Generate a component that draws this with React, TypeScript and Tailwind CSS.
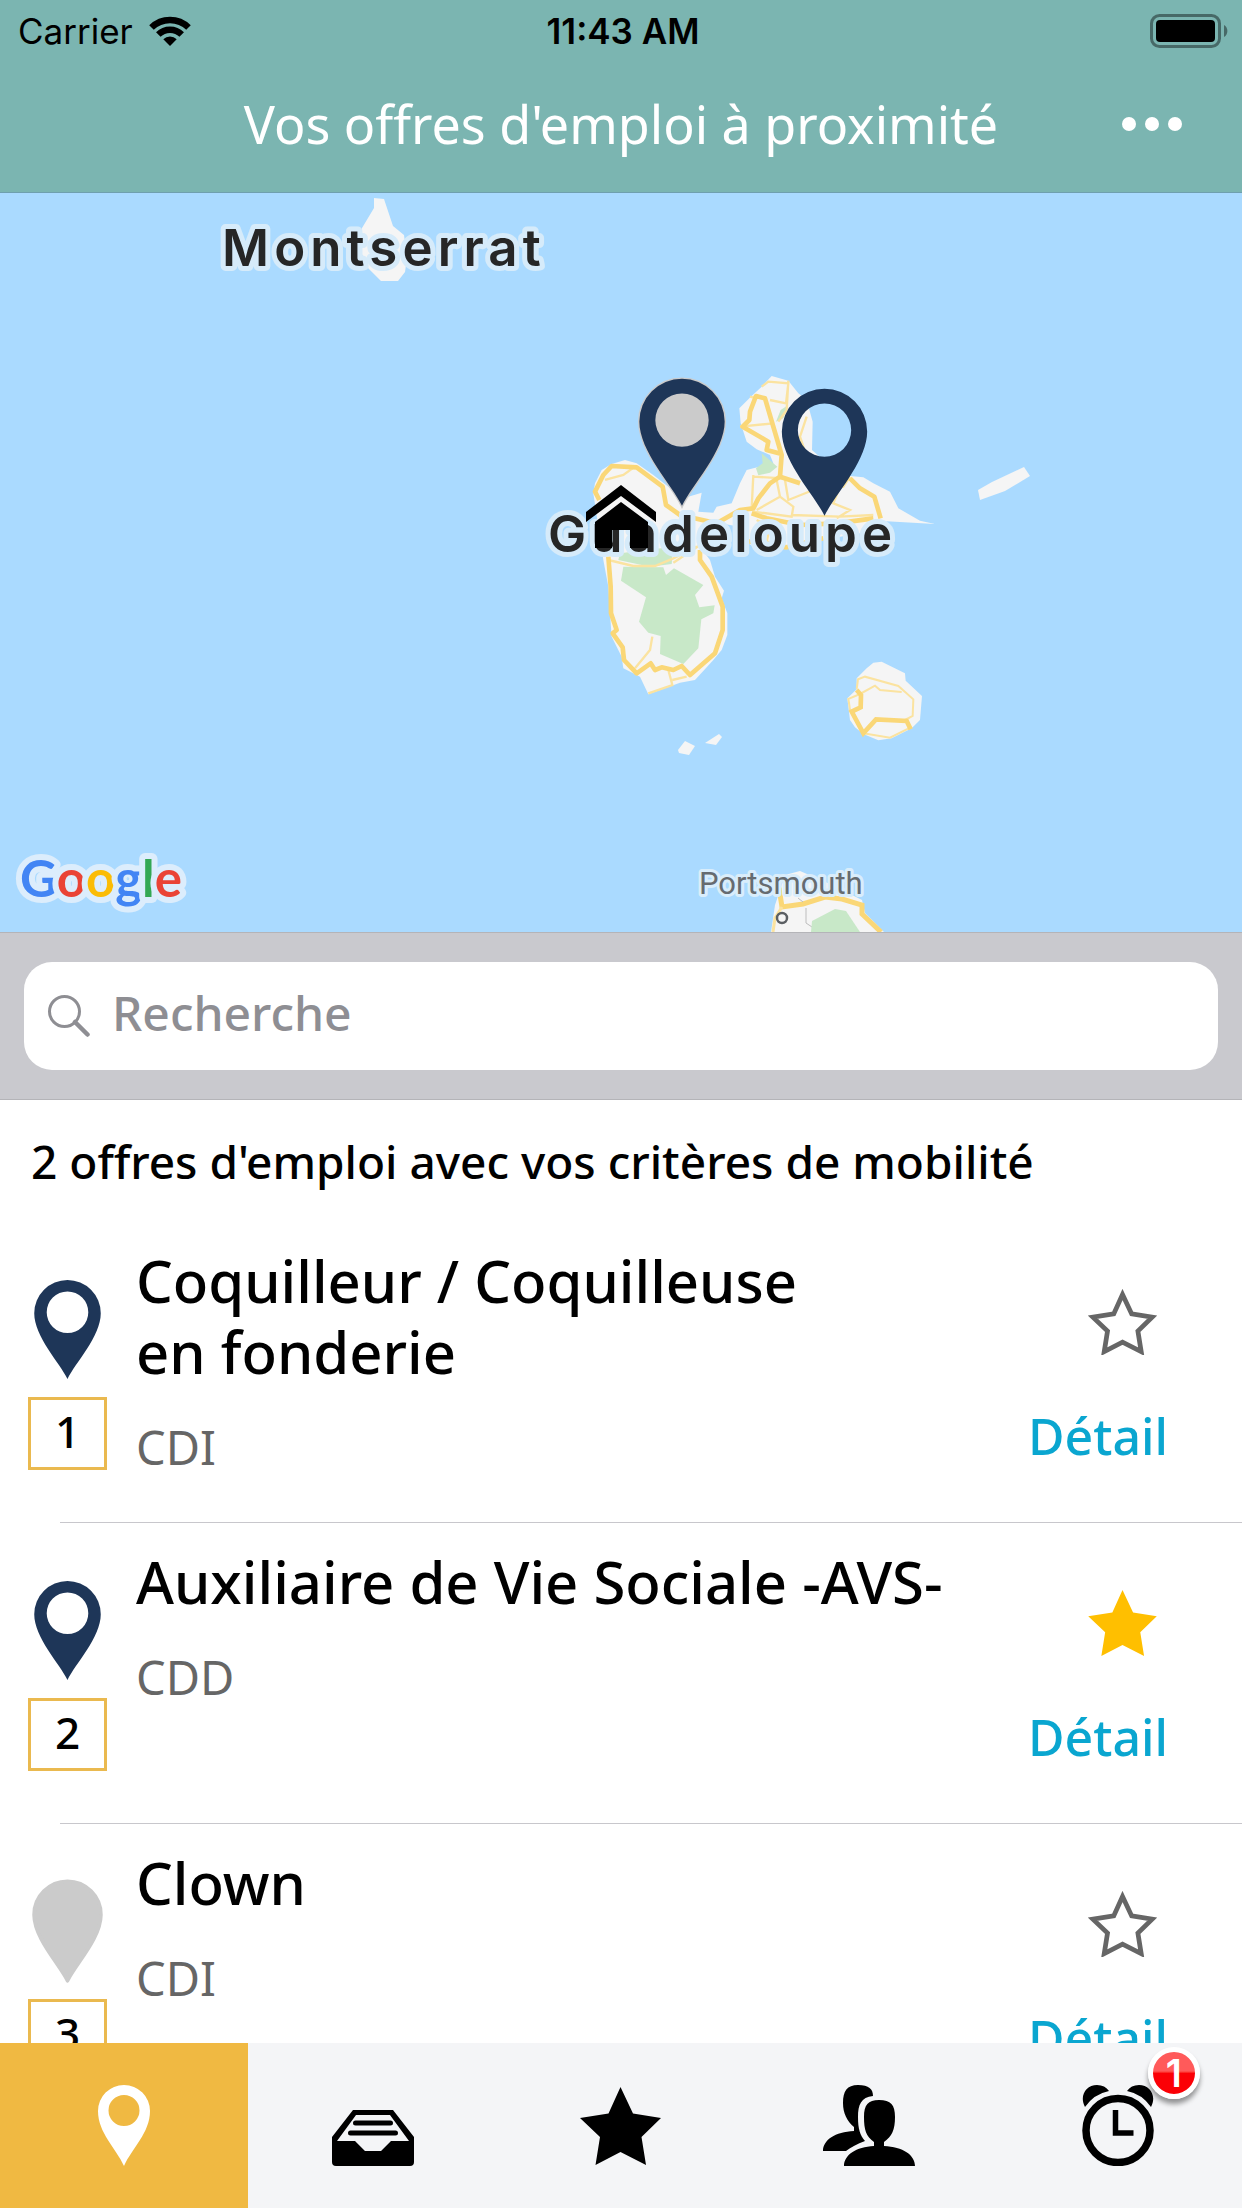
import React from "react";

const PIN_BODY =
  "M0 253C-30 190-128 90-128 0A128 128 0 0 1 128 0C128 90 30 190 0 253Z";
const PIN_HOLE = "M80 -4A80 80 0 1 0 -80 -4A80 80 0 1 0 80 -4Z";
const STAR =
  "M40.5 0L53 26.5L81 31L61.500 50L66 78L40.5 65L15.5 78L20 50L0 31L28.500 26.500Z";

const offers = [
  { id: 1, title: "Coquilleur / Coquilleuse\nen fonderie", contract: "CDI", starred: false, located: true },
  { id: 2, title: "Auxiliaire de Vie Sociale -AVS-", contract: "CDD", starred: true, located: true },
  { id: 3, title: "Clown", contract: "CDI", starred: false, located: false },
];

function StatusBar() {
  return (
    <div className="grid h-[62px] grid-cols-3 items-center pr-[14px] pl-[18px] font-['Inter',sans-serif] text-[35px] leading-[42px] text-black">
      <div className="flex items-center gap-4">
        <span>Carrier</span>
        <svg viewBox="0 0 42 30" className="h-[30px] w-[42px]" fill="none" stroke="#000" strokeWidth="6.500" aria-label="Wi-Fi">
          <path d="M2.500 11.500A26.500 26.500 0 0 1 39.500 11.500" />
          <path d="M9.300 18.500A16.800 16.800 0 0 1 32.700 18.500" />
          <path d="M21 30L14.300 23.300A9.500 9.500 0 0 1 27.700 23.300Z" fill="#000" stroke="none" />
        </svg>
      </div>
      <span className="text-center font-semibold">11:43 AM</span>
      <svg viewBox="0 0 78 34" className="h-[34px] w-[78px] justify-self-end" aria-label="Batterie">
        <rect x="1.500" y="1.500" width="68" height="31" rx="8" fill="none" stroke="#000" strokeOpacity=".42" strokeWidth="3" />
        <rect x="6" y="6" width="59" height="22" rx="4" fill="#000" />
        <path d="M74 11A7 7 0 0 1 74 23Z" fill="#000" fillOpacity=".42" />
      </svg>
    </div>
  );
}

function Header() {
  return (
    <header className="shrink-0 border-b border-[#6f9fae] bg-[#7bb5b1]">
      <StatusBar />
      <div className="grid grid-cols-[124px_1fr_124px] items-center pt-[30px] pb-[36px]">
        <h1 className="col-start-2 text-center text-[52px] leading-[64px] text-white">
          Vos offres d'emploi à proximité
        </h1>
        <button type="button" aria-label="Plus d'options" className="flex h-16 items-center gap-[9px] pl-1">
          <span className="size-[14px] rounded-full bg-white" />
          <span className="size-[14px] rounded-full bg-white" />
          <span className="size-[14px] rounded-full bg-white" />
        </button>
      </div>
    </header>
  );
}

function MapView() {
  return (
    <section aria-label="Carte" className="shrink-0 bg-[#aadaff]">
      <svg viewBox="0 193 1242 739" className="block w-full">
        <g fill="#f5f5f5">
          <path d="M374 198L384 199L393 226L404 235L407 258L405 272L398 281L381 281L368 268L358 245L362 228L374 208Z" />
          <path d="M978 490L992 482L1024 467L1030 476L1005 491L980 500Z" />
          <path d="M678 750L685 741L695 746L689 755L679 753Z" />
          <path d="M705 743L719 734L722 737L716 745Z" />
          <path d="M771 932L775 905L785 875L800 871L830 884L862 900L865 913L884 932Z" />
        </g>

        <g transform="translate(540 360) scale(.33333)">
          <path
            fill="#f5f5f5"
            d="M160 400L165 370L185 330L215 312L255 300L290 310L340 345L385 380L430 415L485 398L475 455L520 458L530 440L575 430L600 370L620 330L640 325L700 310L690 285L650 268L620 245L602 190L598 145L635 108L665 80L695 48L745 62L775 100L800 120L818 185L816 270L900 345L970 352L1000 370L1050 395L1075 445L1140 482L1185 492L1040 484L1020 510L900 530L850 540L740 568L640 560L612 540L600 500L540 490L500 500L480 560L510 600L525 650L552 692L545 715L562 760L562 825L545 870L520 900L465 960L420 968L325 1003L300 950L250 925L245 890L215 830L210 760L205 680L190 600L175 500Z"
          />
          <g fill="#c8e8c8">
            <path d="M240 580L400 560L395 612L330 620L235 600Z" />
            <path d="M250 620L370 622L378 645L402 625L490 675L465 705L478 742L524 736L520 760L484 778L475 865L430 912L360 882L362 828L325 818L297 785L318 712L243 662Z" />
            <path d="M665 280L712 320L690 338L655 346L648 325L668 310Z" />
            <path d="M722 150L745 135L730 175L708 185Z" />
          </g>
          <g fill="none" stroke="#fbe3a0" strokeWidth="7">
            <path d="M195 360L250 345L285 320M205 600L280 618L345 618L400 595L470 560M400 608L480 555M285 925L330 870L337 830M385 930L397 975L325 1000M397 960L440 950" />
            <path d="M665 80L685 65L745 70L738 130L690 120M600 200L700 190M745 62L740 150L715 185M630 110L650 115M640 350L730 355M640 345L635 445M650 450L720 410L710 360M720 410L760 440L755 470L640 455M735 360L745 420L820 390M755 465L900 470L1000 465M900 380L880 430L930 450L890 475M800 170L780 230L800 290M930 350L910 380L885 375M650 480L690 500L680 545L720 550" />
          </g>
          <g fill="none" stroke="#fad777" strokeWidth="14" strokeLinejoin="round">
            <path d="M178 420L165 395L190 345L215 318L290 322L368 380L378 435L420 465L530 490L600 450L640 445L655 415L690 370L720 350L725 285L675 115L648 108L630 155L628 180L608 200L685 245L680 270L725 282" />
            <path d="M720 350L780 370M930 355L960 385L1003 410L1022 475M1000 475L890 490L780 495L680 475L635 460" />
            <path d="M205 590L212 680L213 760L230 810L218 820L248 862L252 900L290 940L332 910L345 930L365 922L400 930L425 918L450 945L525 880L548 810L548 740L515 650L480 600L480 570" />
            <path d="M600 540L740 562L850 535" />
          </g>
        </g>

        <g transform="translate(840 440) scale(.33333)">
          <path fill="#f5f5f5" d="M50 715L80 685L100 668L125 665L195 700L197 722L246 768L240 840L215 865L155 895L115 901L70 882L45 862L30 840L22 775L50 748Z" />
          <g fill="none" stroke="#fbe3a0" strokeWidth="6">
            <path d="M50 748L54 718L75 710L175 738L220 778L218 828L195 840M22 778L60 762L105 737L120 750L185 756M30 810L25 775M70 880L150 893L212 862" />
          </g>
          <path fill="none" stroke="#fad777" strokeWidth="14" d="M50 750L63 765L62 802L35 815L70 880L108 838L200 843L212 868" />
        </g>

        <g fill="none">
          <path stroke="#fad777" strokeWidth="5" d="M779 888L782 907L803 904L825 897L842 899L862 905L862 914L881 932" />
          <path stroke="#fbe3a0" strokeWidth="3" d="M782 907L775 918L773 932" />
          <path stroke="#bdbdbd" strokeWidth="1" d="M806 908L806 923L812 927M798 898L803 902" />
        </g>
        <path fill="#c8e8c8" d="M811 932L812 921L835 909L846 911L860 932Z" />

        <g
          className="font-['Inter',sans-serif] text-[51px] font-semibold tracking-widest"
          fill="#262626"
          stroke="#d6ebfa"
          strokeWidth="10"
          strokeLinejoin="round"
          paintOrder="stroke"
        >
          <text x="222" y="266">Montserrat</text>
          <text x="548" y="552">Guadeloupe</text>
        </g>
        <text x="699" y="894" className="font-['Roboto',sans-serif] text-[31px]" fill="#666b70" stroke="#d9edfb" strokeWidth="6" strokeLinejoin="round" paintOrder="stroke">
          Portsmouth
        </text>
        <circle cx="782" cy="918" r="5" fill="#f5f5f5" stroke="#5b5f63" strokeWidth="2.500" />

        <text x="20" y="897" className="font-['Lato',sans-serif] text-[51px] font-bold" stroke="#dcedfc" strokeWidth="12" strokeLinejoin="round" paintOrder="stroke">
          <tspan fill="#4285f4">G</tspan>
          <tspan fill="#ea4335">o</tspan>
          <tspan fill="#fbbc05">o</tspan>
          <tspan fill="#4285f4">g</tspan>
          <tspan fill="#34a853">l</tspan>
          <tspan fill="#ea4335">e</tspan>
        </text>

        <g transform="translate(621 485)">
          <path d="M0 0L35 27V37L0 11L-35 37V27Z" />
          <path d="M0 17L27 37V63H9V45H-9V63H-26V37Z" />
        </g>
        <g transform="translate(682 421.500) scale(.33333)">
          <path d={PIN_BODY} fill="#cbcbcb" stroke="#cbcbcb" strokeWidth="8" />
          <path d={PIN_BODY + PIN_HOLE} fill="#1e3658" fillRule="evenodd" />
        </g>
        <path transform="translate(824.500 431.500) scale(.33333)" d={PIN_BODY + PIN_HOLE} fill="#1e3658" fillRule="evenodd" />
      </svg>
    </section>
  );
}

function SearchBar() {
  return (
    <div className="shrink-0 border-y border-[#b4b4b8] bg-[#c9c9ce] px-6 py-[29px]">
      <label className="flex h-[108px] items-center gap-[22px] rounded-[28px] bg-white px-6">
        <svg viewBox="0 0 42 42" className="size-[42px] shrink-0" fill="none" stroke="#8e8e93" aria-hidden="true">
          <circle cx="16.500" cy="16.500" r="15" strokeWidth="3" />
          <path d="M27 27L39.500 39.500" strokeWidth="4.500" strokeLinecap="round" />
        </svg>
        <input
          type="search"
          aria-label="Recherche"
          placeholder="Recherche"
          className="min-w-0 flex-1 bg-transparent pb-[6px] text-[48px] leading-[64px] font-medium text-black outline-none placeholder:text-[#8e8e93]"
        />
      </label>
    </div>
  );
}

function OfferPin({ located }: { located: boolean }) {
  return located ? (
    <svg viewBox="-128 -128 256 381" className="h-[99px] w-[67px]" aria-hidden="true">
      <path d={PIN_BODY + PIN_HOLE} fill="#1e3658" fillRule="evenodd" />
    </svg>
  ) : (
    <svg viewBox="-136 -136 272 397" className="-mt-[3px] -mb-[2px] h-[104px] w-[71px]" aria-hidden="true">
      <path d={PIN_BODY} fill="#cbcbcb" stroke="#cbcbcb" strokeWidth="14" strokeLinejoin="round" />
    </svg>
  );
}

function OfferRow({ offer }: { offer: (typeof offers)[number] }) {
  return (
    <li className="shrink-0">
      <div className="flex min-h-[300px]">
        <div className="flex w-[136px] shrink-0 flex-col items-center pt-[58px] pr-[29px] pl-7">
          <OfferPin located={offer.located} />
          <span className="mt-[18px] flex h-[73px] w-[79px] items-center justify-center border-3 border-[#eab94f] pb-[6px] text-[44px] leading-[52px] font-medium">
            {offer.id}
          </span>
        </div>
        <div className="min-w-0 flex-1 pt-[23px]">
          <h2 className="text-[58px] leading-[71px] font-medium whitespace-pre-line">{offer.title}</h2>
          <p className="mt-[28px] text-[47px] leading-[64px] text-[#666]">{offer.contract}</p>
        </div>
        <div className="flex w-[240px] shrink-0 flex-col items-center pt-[67px]">
          <button type="button" aria-label="Favori" aria-pressed={offer.starred}>
            <svg viewBox="0 0 81 78" className="block h-[66px] w-[69px]" aria-hidden="true">
              {offer.starred ? (
                <path d={STAR} fill="#ffbf00" />
              ) : (
                <path transform="translate(5.500 6.500) scale(.865 .865)" d={STAR} fill="none" stroke="#666" strokeWidth="6.500" />
              )}
            </svg>
          </button>
          <a href="#detail" className="mt-[49px] mr-12 text-[50px] leading-[64px] font-medium text-[#0aa6d0]">
            Détail
          </a>
        </div>
      </div>
      <div className="ml-[60px] h-px bg-[#c8c7cc]" />
    </li>
  );
}

const tabIcons = [
  {
    label: "À proximité",
    icon: (
      <svg viewBox="0 0 52 81" className="h-[81px] w-[52px]" aria-hidden="true">
        <path fill="#fff" fillRule="evenodd" d="M26 81C18 63 0 48 0 26A26 26 0 0 1 52 26C52 48 34 63 26 81ZM41.500 25.500A15.500 15.500 0 1 0 10.500 25.500A15.500 15.500 0 1 0 41.500 25.500Z" />
      </svg>
    ),
  },
  {
    label: "Boîte de réception",
    icon: (
      <svg viewBox="0 0 82 56" className="mt-[25px] h-[56px] w-[82px]" aria-hidden="true">
        <path fillRule="evenodd" d="M21 0H61L82 27V52Q82 56 78 56H4Q0 56 0 52V27ZM24 5L5 31H23L33 41H49L59 31H77L58 5Z" />
        <path fill="none" stroke="#000" strokeWidth="5" strokeLinecap="round" d="M23.500 13H58.500M18.500 23H63.500" />
      </svg>
    ),
  },
  {
    label: "Favoris",
    icon: (
      <svg viewBox="0 0 81 78" className="h-[78px] w-[81px]" aria-hidden="true">
        <path d={STAR} />
      </svg>
    ),
  },
  {
    label: "Contacts",
    icon: (
      <svg viewBox="0 0 92 81" className="h-[81px] w-[92px]" aria-hidden="true">
        <path d="M35 0C46 0 50 4 50 11C38 12 35 20 35 32C35 44 37 50 42 56C34 59 28 62 23 66H0C0 55 12 47 31 46V42C24 36 20 28 20 18C20 6 24 0 35 0Z" />
        <path d="M56 15C68 15 72 20 72 32C72 45 69 51 61 57V61C80 62 92 70 92 81H21C21 70 33 62 51 61V57C43 51 41 45 41 32C41 20 45 15 56 15Z" />
      </svg>
    ),
  },
  {
    label: "Alertes",
    badge: 1,
    icon: (
      <svg viewBox="0 0 72 81" className="h-[81px] w-[72px]" aria-hidden="true">
        <circle cx="36" cy="45.500" r="32" fill="none" stroke="#000" strokeWidth="7.500" />
        <path d="M3 22C-3 11 4 0 15 0Q23 0 27 6Q12 9 3 22ZM69 22C75 11 68 0 57 0Q49 0 45 6Q60 9 69 22Z" />
        <path fill="none" stroke="#000" strokeWidth="5.500" d="M33.500 25V48H51.500" />
      </svg>
    ),
  },
];

function TabBar() {
  return (
    <nav className="grid shrink-0 grid-cols-5 bg-[#f4f5f7]">
      {tabIcons.map((tab, i) => (
        <button
          key={tab.label}
          type="button"
          aria-label={tab.label}
          className={i === 0 ? "flex h-[165px] items-center justify-center bg-[#f0b942]" : "flex h-[165px] items-center justify-center"}
        >
          <span className="relative">
            {tab.icon}
            {tab.badge && (
              <span className="absolute -top-[38px] -right-[46px] flex size-[52px] items-center justify-center rounded-full border-5 border-white bg-linear-to-b from-[#ff5a5a] from-45% to-[#fb0006] to-50% font-['Inter',sans-serif] text-[38px] leading-[42px] font-semibold text-white shadow-[0_5px_5px_rgba(0,0,0,0.4)]">
                {tab.badge}
              </span>
            )}
          </span>
        </button>
      ))}
    </nav>
  );
}

export default function App() {
  return (
    <div className="flex h-screen flex-col overflow-hidden bg-white font-['Noto_Sans',sans-serif] text-black">
      <Header />
      <MapView />
      <SearchBar />
      <main className="min-h-0 flex-1 overflow-hidden">
        <p className="px-[31px] pt-[29px] pb-[29px] text-[46px] leading-[64px] font-medium">
          2 offres d'emploi avec vos critères de mobilité
        </p>
        <ul>
          {offers.map((offer) => (
            <OfferRow key={offer.id} offer={offer} />
          ))}
        </ul>
      </main>
      <TabBar />
    </div>
  );
}
